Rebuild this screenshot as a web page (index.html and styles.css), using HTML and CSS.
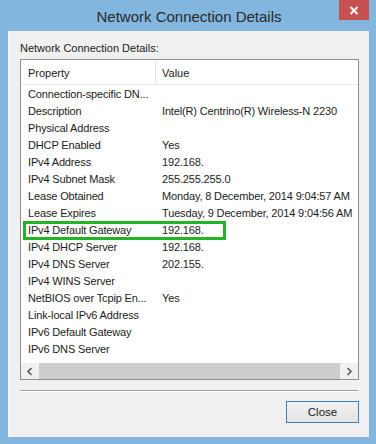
FILE: index.html
```html
<!DOCTYPE html>
<html>
<head>
<meta charset="utf-8">
<link rel="stylesheet" href="styles.css">
</head>
<body>
<div class="window">
  <div class="titlebar">
    <div class="title">Network Connection Details</div>
    <div class="close-x">
      <svg width="10" height="9" viewBox="0 0 10 9"><path d="M1.5 1 L8.5 8 M8.5 1 L1.5 8" stroke="#fff" stroke-width="2" fill="none"/></svg>
    </div>
  </div>
  <div class="client">
    <div class="label">Network Connection Details:</div>
    <div class="list">
      <div class="header">
        <div class="hcol prop">Property</div>
        <div class="hcol val">Value</div>
      </div>
      <div class="rows">
        <div class="row"><span class="p">Connection-specific DN...</span><span class="v"></span></div>
        <div class="row"><span class="p">Description</span><span class="v">Intel(R) Centrino(R) Wireless-N 2230</span></div>
        <div class="row"><span class="p">Physical Address</span><span class="v"></span></div>
        <div class="row"><span class="p">DHCP Enabled</span><span class="v">Yes</span></div>
        <div class="row"><span class="p">IPv4 Address</span><span class="v">192.168.</span></div>
        <div class="row"><span class="p">IPv4 Subnet Mask</span><span class="v">255.255.255.0</span></div>
        <div class="row"><span class="p">Lease Obtained</span><span class="v">Monday, 8 December, 2014 9:04:57 AM</span></div>
        <div class="row"><span class="p">Lease Expires</span><span class="v">Tuesday, 9 December, 2014 9:04:56 AM</span></div>
        <div class="row hl"><span class="p">IPv4 Default Gateway</span><span class="v">192.168.</span><div class="mark"></div></div>
        <div class="row"><span class="p">IPv4 DHCP Server</span><span class="v">192.168.</span></div>
        <div class="row"><span class="p">IPv4 DNS Server</span><span class="v">202.155.</span></div>
        <div class="row"><span class="p">IPv4 WINS Server</span><span class="v"></span></div>
        <div class="row"><span class="p">NetBIOS over Tcpip En...</span><span class="v">Yes</span></div>
        <div class="row"><span class="p">Link-local IPv6 Address</span><span class="v"></span></div>
        <div class="row"><span class="p">IPv6 Default Gateway</span><span class="v"></span></div>
        <div class="row"><span class="p">IPv6 DNS Server</span><span class="v"></span></div>
      </div>
      <div class="hscroll">
        <div class="arrow">
          <svg width="8" height="9" viewBox="0 0 8 9"><path d="M5.5 1 L2 4.5 L5.5 8" stroke="#555" stroke-width="1.6" fill="none"/></svg>
        </div>
        <div class="thumb"></div>
        <div class="arrow">
          <svg width="8" height="9" viewBox="0 0 8 9"><path d="M2.5 1 L6 4.5 L2.5 8" stroke="#555" stroke-width="1.6" fill="none"/></svg>
        </div>
      </div>
    </div>
    <div class="sep"></div>
    <div class="buttons">
      <button class="btn">Close</button>
    </div>
  </div>
</div>
</body>
</html>
```

FILE: styles.css
```css
* { box-sizing: border-box; }
html, body {
  margin: 0;
  padding: 0;
  width: 376px;
  height: 444px;
  overflow: hidden;
  background: #82b6df;
  font-family: "Liberation Sans", Arial, sans-serif;
  color: #1b1b1b;
}
.window {
  width: 376px;
  height: 444px;
  background: #82b6df;
  padding: 0 7px 7px 8px;
  display: flex;
  flex-direction: column;
}
.titlebar {
  height: 31px;
  position: relative;
  display: flex;
  justify-content: center;
  align-items: flex-start;
}
.title {
  font-size: 15px;
  line-height: 15px;
  margin-top: 9px;
  color: #2a2a2a;
  margin-left: 1px;
}
.close-x {
  position: absolute;
  right: 0;
  top: 0;
  width: 30px;
  height: 20px;
  background: #c75150;
  display: flex;
  align-items: center;
  justify-content: center;
}
.client {
  flex: 1;
  background: #f0f0f0;
  border-left: 1px solid #f7f9fb;
  padding: 0 10px 0 11px;
  display: flex;
  flex-direction: column;
}
.label {
  font-size: 11px;
  line-height: 13px;
  margin-top: 11px;
  height: 17px;
}
.list {
  height: 321px;
  background: #fff;
  border: 1px solid #8e8f8f;
  display: flex;
  flex-direction: column;
}
.header {
  height: 25px;
  display: flex;
  border-bottom: 1px solid #eaeaea;
  font-size: 11px;
}
.hcol {
  display: flex;
  align-items: center;
  padding-top: 1px;
}
.hcol.prop {
  width: 135px;
  padding-left: 7px;
  border-right: 1px solid #e5e5e5;
}
.hcol.val {
  padding-left: 6px;
}
.rows {
  flex: 1;
  display: flex;
  flex-direction: column;
}
.row {
  height: 17px;
  display: flex;
  align-items: center;
  font-size: 11px;
  letter-spacing: -0.15px;
  position: relative;
}
.row .p {
  width: 141px;
  padding-left: 7px;
  white-space: nowrap;
}
.row .v {
  white-space: nowrap;
}
.mark {
  position: absolute;
  left: 2px;
  top: 0;
  width: 203px;
  height: 19px;
  border: 3px solid #24b324;
}
.hscroll {
  height: 16px;
  display: flex;
  background: #f0f0f0;
}
.arrow {
  width: 18px;
  display: flex;
  align-items: center;
  justify-content: center;
  background: #f0f0f0;
}
.thumb {
  flex: 1;
  background: #cdcdcd;
}
.sep {
  margin-top: 10px;
  width: 338px;
  height: 2px;
  background: #a0a0a0;
  border-bottom: 1px solid #fff;
}
.buttons {
  display: flex;
  justify-content: flex-end;
  margin-top: 9px;
}
.btn {
  width: 73px;
  height: 22px;
  font-family: "Liberation Sans", Arial, sans-serif;
  font-size: 11.5px;
  color: #1b1b1b;
  border: 1px solid #3c7fb1;
  background: linear-gradient(#f2f2f2, #e4e4e4);
  padding: 0;
  margin: 0;
}
```
